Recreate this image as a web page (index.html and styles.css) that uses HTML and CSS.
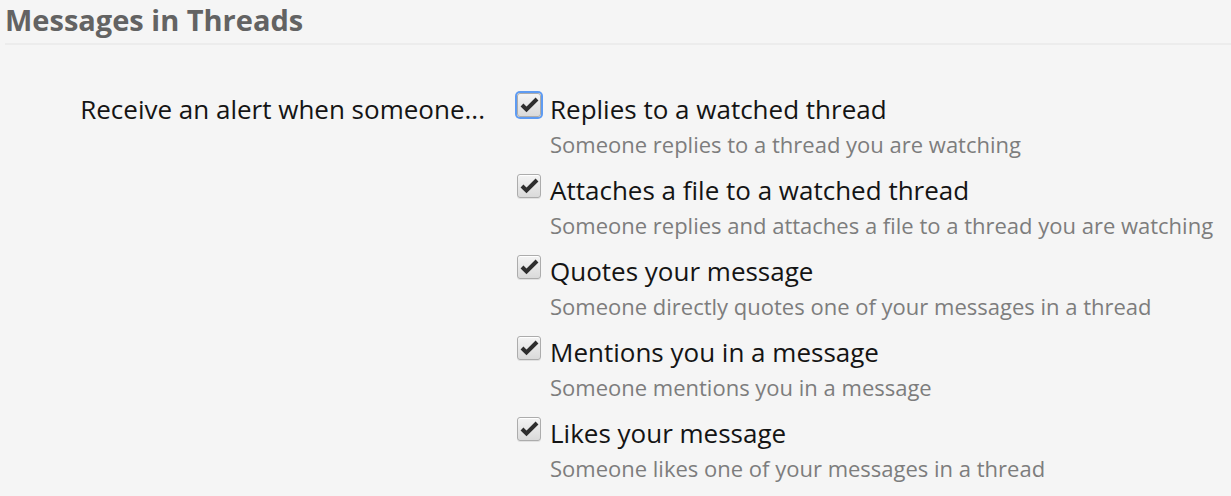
FILE: index.html
```html
<!DOCTYPE html>
<html lang="en">
<head>
  <meta charset="UTF-8">
  <meta name="viewport" content="width=device-width, initial-scale=1.0">
  <title>Alert preferences</title>
  <link rel="stylesheet" href="styles.css">
</head>
<body>

  <h2 class="block-header">Messages in Threads</h2>

  <dl class="form-row">
    <dt class="form-label">Receive an alert when someone...</dt>
    <dd>
      <ul class="choices">
        <li class="choice">
          <span class="check is-focused"><svg viewBox="0 0 22 22"><polyline points="4,11 8.5,15.5 19,5"/></svg></span>
          <div>
            <div class="choice-title">Replies to a watched thread</div>
            <div class="choice-hint">Someone replies to a thread you are watching</div>
          </div>
        </li>
        <li class="choice">
          <span class="check"><svg viewBox="0 0 22 22"><polyline points="4,11 8.5,15.5 19,5"/></svg></span>
          <div>
            <div class="choice-title">Attaches a file to a watched thread</div>
            <div class="choice-hint">Someone replies and attaches a file to a thread you are watching</div>
          </div>
        </li>
        <li class="choice">
          <span class="check"><svg viewBox="0 0 22 22"><polyline points="4,11 8.5,15.5 19,5"/></svg></span>
          <div>
            <div class="choice-title">Quotes your message</div>
            <div class="choice-hint">Someone directly quotes one of your messages in a thread</div>
          </div>
        </li>
        <li class="choice">
          <span class="check"><svg viewBox="0 0 22 22"><polyline points="4,11 8.5,15.5 19,5"/></svg></span>
          <div>
            <div class="choice-title">Mentions you in a message</div>
            <div class="choice-hint">Someone mentions you in a message</div>
          </div>
        </li>
        <li class="choice">
          <span class="check"><svg viewBox="0 0 22 22"><polyline points="4,11 8.5,15.5 19,5"/></svg></span>
          <div>
            <div class="choice-title">Likes your message</div>
            <div class="choice-hint">Someone likes one of your messages in a thread</div>
          </div>
        </li>
      </ul>
    </dd>
  </dl>

</body>
</html>
```

FILE: styles.css
```css
body {
  margin: 0;
  background: #f5f5f5;
  font-family: "Open Sans", "Liberation Sans", sans-serif;
  color: #141414;
}
.block-header {
  margin: 0 0 0 5px;
  padding: 0 0 3px;
  font-size: 29px;
  line-height: 40px;
  font-weight: bold;
  color: #636363;
  border-bottom: 2px solid #ececec;
}
.form-row {
  display: grid;
  grid-template-columns: 485px 1fr;
  column-gap: 32px;
  margin: 46px 0 0;
}
.form-label {
  text-align: right;
  font-size: 26px;
  line-height: 36px;
}
.form-row dd {
  margin: 0;
}
.choices {
  list-style: none;
  margin: 0;
  padding: 0;
}
.choice {
  display: flex;
  gap: 9px;
  margin-bottom: 13px;
}
.check {
  flex: none;
  width: 22px;
  height: 22px;
  margin-top: 2px;
  border: 1px solid #acacac;
  border-radius: 3px;
  background: linear-gradient(#f4f4f4, #dadada);
  box-shadow: inset 0 1px 0 #fff, 0 1px 0 rgba(0, 0, 0, 0.08);
}
.check svg {
  display: block;
  width: 22px;
  height: 22px;
}
.check polyline {
  fill: none;
  stroke: #2e2e2e;
  stroke-width: 4;
  stroke-linejoin: miter;
}
.check.is-focused {
  box-shadow: 0 0 0 2px #5e9bf2;
}
.choice-title {
  font-size: 26px;
  line-height: 36px;
}
.choice-hint {
  margin-top: 2px;
  font-size: 22px;
  line-height: 30px;
  color: #7d7d7d;
}
```
